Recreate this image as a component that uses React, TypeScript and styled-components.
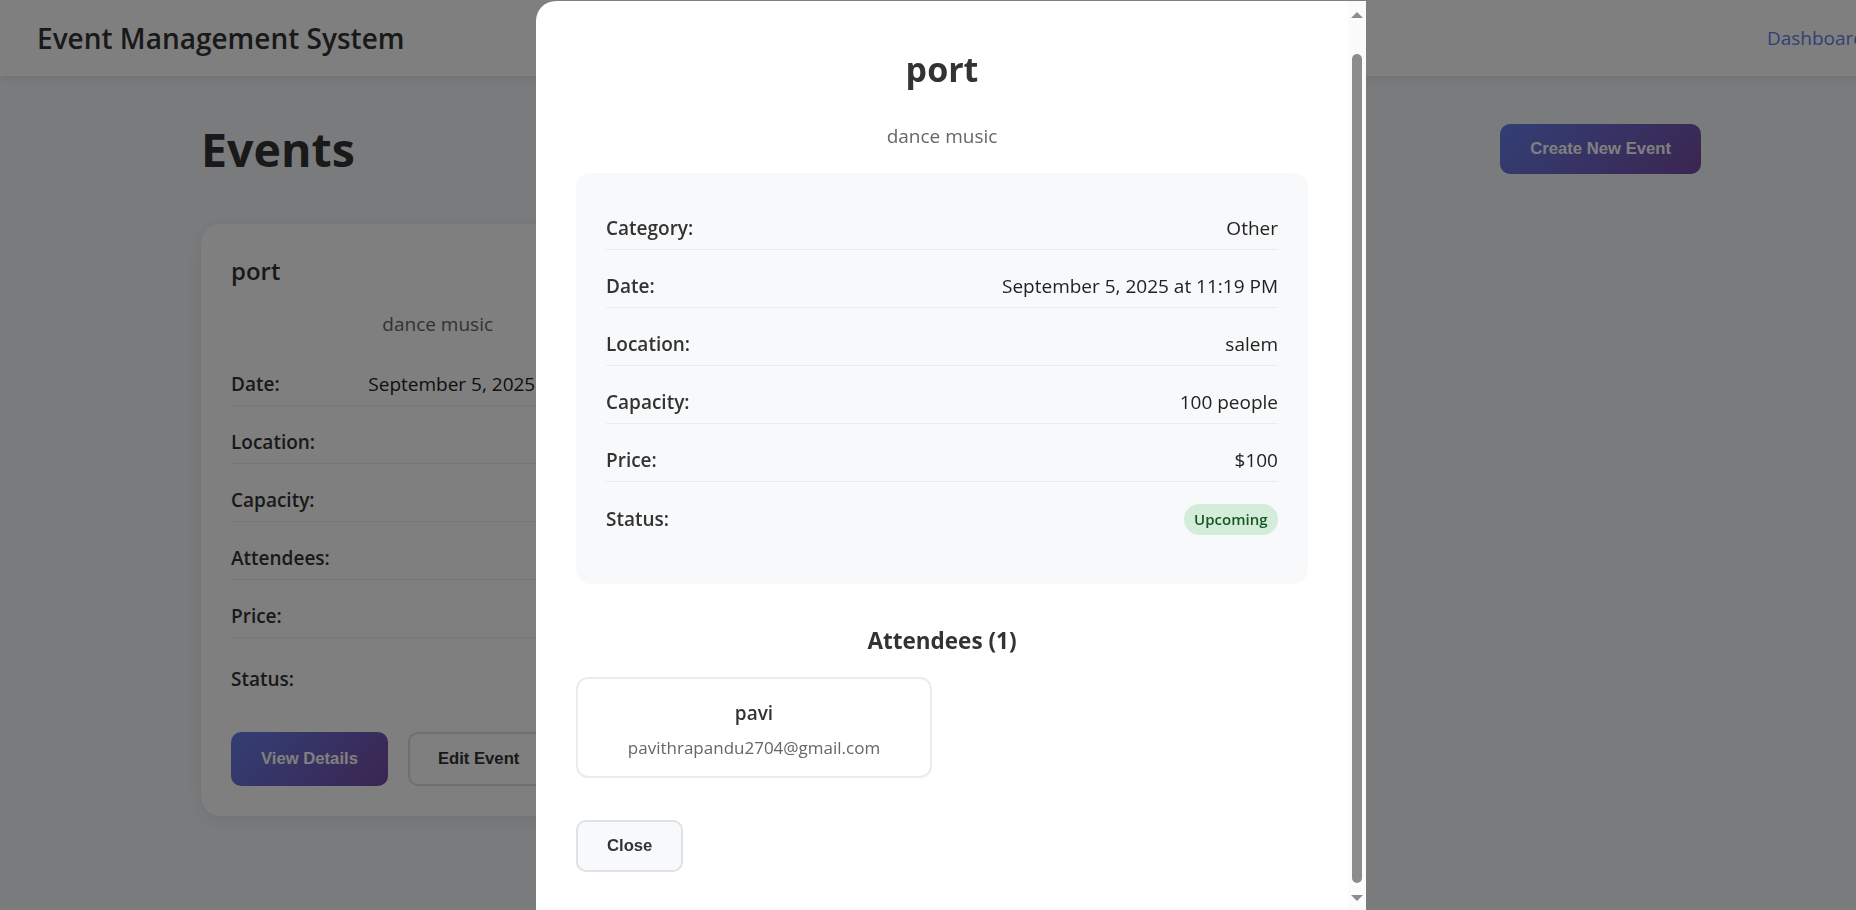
import React from "react";
import styled, { createGlobalStyle } from "styled-components";

const GlobalStyle = createGlobalStyle`
  * {
    box-sizing: border-box;
  }
  body {
    margin: 0;
    overflow: hidden;
    background: #f5f7fa;
    font-family: "Open Sans", "Noto Sans", sans-serif;
    color: #333;
  }
`;

const Page = styled.div`
  width: 1902px;
  min-height: 100vh;
`;

const Navbar = styled.nav`
  height: 76px;
  padding: 0 37px;
  background: #ffffff;
  box-shadow: 0 2px 10px rgba(0, 0, 0, 0.1);
  display: flex;
  align-items: center;
  justify-content: space-between;
`;

const Brand = styled.div`
  font-size: 28px;
  font-weight: 600;
  color: #333;
`;

const NavLink = styled.a`
  font-size: 19px;
  font-weight: 500;
  color: #667eea;
  text-decoration: none;
`;

const Main = styled.main`
  width: 1500px;
  margin: 0 auto;
  padding-top: 43px;
`;

const Header = styled.div`
  height: 60px;
  display: flex;
  align-items: center;
  justify-content: space-between;
  margin-bottom: 45px;
`;

const PageTitle = styled.h1`
  margin: 0;
  font-size: 46.5px;
  font-weight: 700;
  line-height: 60px;
  color: #333;
`;

const Button = styled.button<{ $variant?: "primary" | "outline" | "light"; $tall?: boolean }>`
  font-family: "Liberation Sans", Arial, sans-serif;
  font-size: 16.67px;
  font-weight: 700;
  line-height: 20px;
  border-radius: 10px;
  cursor: pointer;
  padding: ${(p) => (p.$tall ? "17px 30px" : "15px 30px")};
  border: none;
  color: #fff;
  background: linear-gradient(135deg, #667eea 0%, #764ba2 100%);

  ${(p) =>
    p.$variant === "outline" &&
    `
    background: transparent;
    color: #333;
    border: 2px solid #dcdfe3;
    padding: ${p.$tall ? "15px 28px" : "13px 28px"};
  `}

  ${(p) =>
    p.$variant === "light" &&
    `
    background: #f8f9fa;
    color: #333;
    border: 2px solid #dee2e6;
    padding: 15px 29px;
    line-height: 18px;
  `}
`;

const EventGrid = styled.div`
  display: grid;
  grid-template-columns: repeat(3, 1fr);
  gap: 40px;
`;

const Card = styled.div`
  background: #ffffff;
  border-radius: 20px;
  padding: 30px;
  box-shadow: 0 4px 20px rgba(0, 0, 0, 0.08);
`;

const CardTitle = styled.h3`
  margin: 2px 0 0;
  font-size: 24px;
  font-weight: 600;
  line-height: 30px;
  color: #333;
`;

const CardDesc = styled.p`
  margin: 24px 0 0;
  text-align: center;
  font-size: 19px;
  line-height: 28px;
  color: #666;
`;

const Details = styled.div<{ $top: number }>`
  margin-top: ${(p) => p.$top}px;
  display: flex;
  flex-direction: column;
  gap: 16px;
`;

const DetailRow = styled.div`
  display: flex;
  align-items: center;
  justify-content: space-between;
  padding: 10px 0;
  border-bottom: 1px solid #e9ecef;
  font-size: 19px;
  line-height: 21px;

  &:last-child {
    border-bottom: none;
  }
`;

const Label = styled.span`
  font-weight: 600;
  color: #333;
`;

const Value = styled.span`
  color: #222;
`;

const Badge = styled.span<{ $trim: number }>`
  margin: ${(p) => -p.$trim}px 0;
  padding: 4px 10.5px;
  border-radius: 16px;
  background: #d4edda;
  color: #155724;
  font-size: 15px;
  font-weight: 600;
  line-height: 23px;
`;

const CardActions = styled.div`
  margin-top: 27px;
  display: flex;
  gap: 20px;
`;

const Overlay = styled.div`
  position: fixed;
  top: 0;
  left: 0;
  width: 1902px;
  height: 100vh;
  padding-top: 1px;
  background: rgba(0, 0, 0, 0.5);
  display: flex;
  justify-content: center;
  align-items: flex-start;
`;

const Modal = styled.div`
  width: 830px;
  height: 909px;
  background: #ffffff;
  border-radius: 20px 0 0 0;
  overflow: hidden;
  display: flex;
`;

const ModalBody = styled.div`
  flex: 1;
  min-width: 0;
  padding: 41px 40px 0;
`;

/* the modal's scrollbar, as the reference shows it */
const ScrollGutter = styled.div`
  width: 18px;
  flex-shrink: 0;
  background: #fbfbfb;
  display: flex;
  flex-direction: column;
  align-items: center;
  padding: 11px 0 9px;
`;

const Arrow = styled.div<{ $down?: boolean }>`
  width: 0;
  height: 0;
  border-left: 6px solid transparent;
  border-right: 6px solid transparent;
  ${(p) =>
    p.$down ? "border-top: 6px solid #8c8c8c;" : "border-bottom: 6px solid #8c8c8c;"}
`;

const Thumb = styled.div`
  flex: 1;
  width: 10px;
  margin: 36px 0 12px;
  border-radius: 5px;
  background: #8c8c8c;
`;

const ModalTitle = styled.h2`
  margin: 6px 0 0;
  text-align: center;
  font-size: 34px;
  font-weight: 700;
  line-height: 42px;
  color: #333;
`;

const ModalDesc = styled.p`
  margin: 31px 0 0;
  text-align: center;
  font-size: 19px;
  line-height: 30px;
  color: #666;
`;

const InfoBox = styled.div`
  margin-top: 22px;
  background: #f8f9fa;
  border-radius: 15px;
  padding: 35px 30px 43px;
`;

const SectionTitle = styled.h3`
  margin: 43px 0 0;
  text-align: center;
  font-size: 22.5px;
  font-weight: 700;
  line-height: 28px;
  color: #333;
`;

const AttendeeGrid = styled.div`
  margin-top: 22px;
  display: grid;
  grid-template-columns: repeat(2, 1fr);
  gap: 20px;
`;

const AttendeeCard = styled.div`
  border: 2px solid #e9ecef;
  border-radius: 12px;
  padding: 21px 20px 16px;
  text-align: center;
`;

const AttendeeName = styled.div`
  font-size: 19px;
  font-weight: 600;
  line-height: 26px;
  color: #333;
`;

const AttendeeEmail = styled.div`
  margin-top: 10px;
  font-size: 17px;
  line-height: 24px;
  color: #666;
`;

const CloseRow = styled.div`
  margin-top: 42px;
`;

const event = {
  title: "port",
  description: "dance music",
  category: "Other",
  date: "September 5, 2025 at 11:19 PM",
  location: "salem",
  capacity: 100,
  attendees: [{ name: "pavi", email: "pavithrapandu2704@gmail.com" }],
  price: "$100",
  status: "Upcoming",
};

const App = () => {
  return (
    <>
      <GlobalStyle />
      <Page>
        <Navbar>
          <Brand>Event Management System</Brand>
          <NavLink href="#">Dashboard</NavLink>
        </Navbar>
        <Main>
          <Header>
            <PageTitle>Events</PageTitle>
            <Button>Create New Event</Button>
          </Header>
          <EventGrid>
            <Card>
              <CardTitle>{event.title}</CardTitle>
              <CardDesc>{event.description}</CardDesc>
              <Details $top={26}>
                <DetailRow>
                  <Label>Date:</Label>
                  <Value>{event.date}</Value>
                </DetailRow>
                <DetailRow>
                  <Label>Location:</Label>
                  <Value>{event.location}</Value>
                </DetailRow>
                <DetailRow>
                  <Label>Capacity:</Label>
                  <Value>{event.capacity}</Value>
                </DetailRow>
                <DetailRow>
                  <Label>Attendees:</Label>
                  <Value>
                    {event.attendees.length} / {event.capacity}
                  </Value>
                </DetailRow>
                <DetailRow>
                  <Label>Price:</Label>
                  <Value>{event.price}</Value>
                </DetailRow>
                <DetailRow>
                  <Label>Status:</Label>
                  <Badge $trim={0}>{event.status}</Badge>
                </DetailRow>
              </Details>
              <CardActions>
                <Button $tall>View Details</Button>
                <Button $tall $variant="outline">
                  Edit Event
                </Button>
              </CardActions>
            </Card>
          </EventGrid>
        </Main>
      </Page>

      <Overlay>
        <Modal>
          <ModalBody>
            <ModalTitle>{event.title}</ModalTitle>
            <ModalDesc>{event.description}</ModalDesc>
            <InfoBox>
              <Details $top={0}>
                <DetailRow>
                  <Label>Category:</Label>
                  <Value>{event.category}</Value>
                </DetailRow>
                <DetailRow>
                  <Label>Date:</Label>
                  <Value>{event.date}</Value>
                </DetailRow>
                <DetailRow>
                  <Label>Location:</Label>
                  <Value>{event.location}</Value>
                </DetailRow>
                <DetailRow>
                  <Label>Capacity:</Label>
                  <Value>{event.capacity} people</Value>
                </DetailRow>
                <DetailRow>
                  <Label>Price:</Label>
                  <Value>{event.price}</Value>
                </DetailRow>
                <DetailRow>
                  <Label>Status:</Label>
                  <Badge $trim={4}>{event.status}</Badge>
                </DetailRow>
              </Details>
            </InfoBox>

            <SectionTitle>Attendees ({event.attendees.length})</SectionTitle>
            <AttendeeGrid>
              {event.attendees.map((a) => (
                <AttendeeCard key={a.email}>
                  <AttendeeName>{a.name}</AttendeeName>
                  <AttendeeEmail>{a.email}</AttendeeEmail>
                </AttendeeCard>
              ))}
            </AttendeeGrid>

            <CloseRow>
              <Button $variant="light">Close</Button>
            </CloseRow>
          </ModalBody>
          <ScrollGutter>
            <Arrow />
            <Thumb />
            <Arrow $down />
          </ScrollGutter>
        </Modal>
      </Overlay>
    </>
  );
};

export default App;
